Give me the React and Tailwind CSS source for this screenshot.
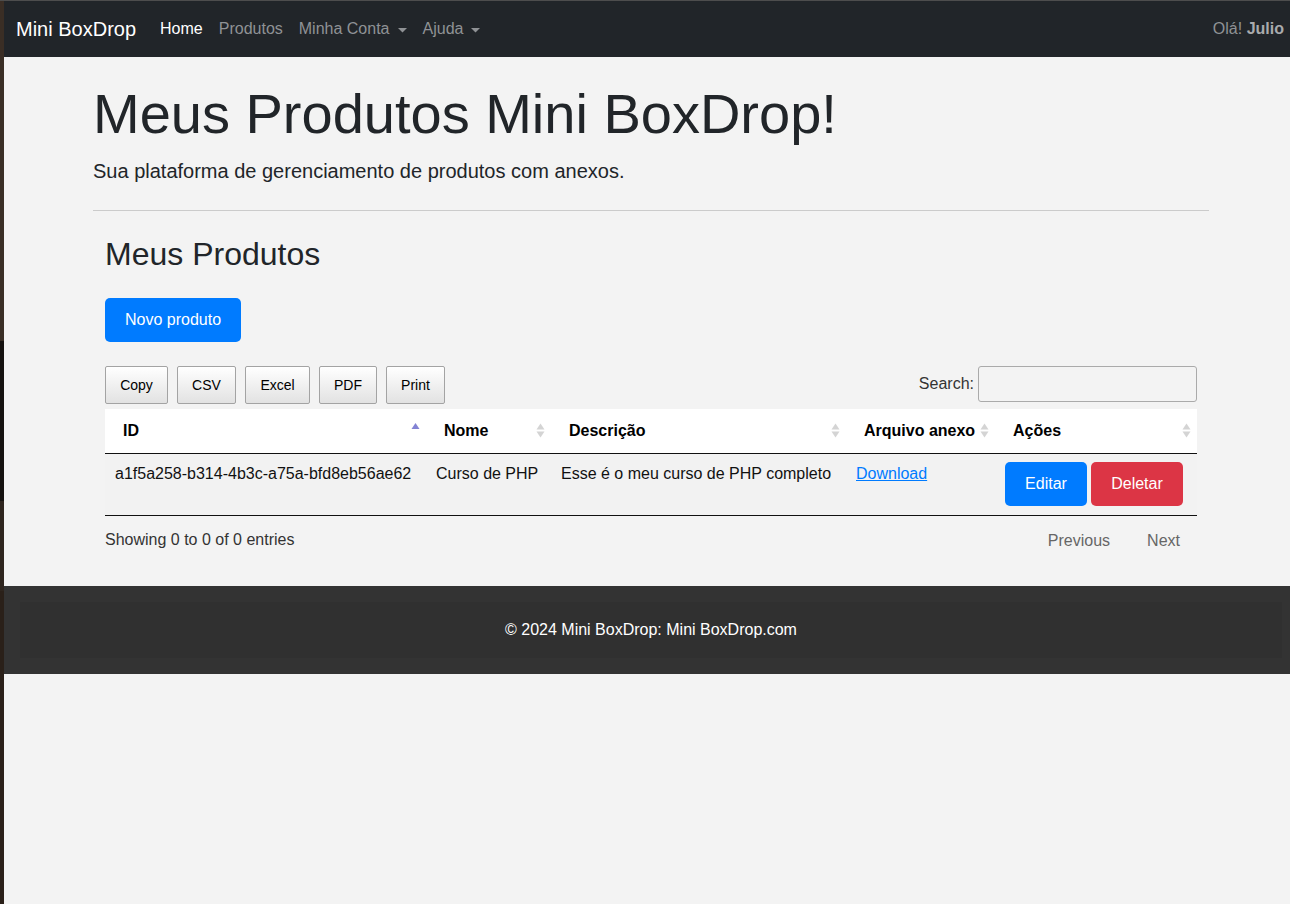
import React from 'react';

const SortIcon = ({ mode }) => {
  // mode: 'asc' shows the blue up arrow only, 'both' shows both gray arrows
  if (mode === 'asc') {
    return (
      <svg width="9" height="16" viewBox="0 0 9 16" className="absolute right-[6px] top-[13px]">
        <polygon points="0.5,7 4.5,1 8.5,7" fill="#8383d4" />
      </svg>
    );
  }
  return (
    <svg width="9" height="16" viewBox="0 0 9 16" className="absolute right-[6px] top-[14px]">
      <polygon points="0.5,6.5 4.5,0.5 8.5,6.5" fill="#d4d4d4" />
      <polygon points="0.5,8.5 4.5,14.5 8.5,8.5" fill="#d4d4d4" />
    </svg>
  );
};

const Caret = () => (
  <svg width="9" height="5" viewBox="0 0 9 5" className="ml-[8px] mt-[2px]">
    <polygon points="0,0 9,0 4.5,4.5" fill="currentColor" />
  </svg>
);

const App = () => {
  const exportButtons = [
    { label: 'Copy', w: 'w-[63px]' },
    { label: 'CSV', w: 'w-[59px]' },
    { label: 'Excel', w: 'w-[65px]' },
    { label: 'PDF', w: 'w-[58px]' },
    { label: 'Print', w: 'w-[59px]' },
  ];

  const columns = [
    { label: 'ID', width: 'w-[321px]', sort: 'asc' },
    { label: 'Nome', width: 'w-[125px]', sort: 'both' },
    { label: 'Descrição', width: 'w-[295px]', sort: 'both' },
    { label: 'Arquivo anexo', width: 'w-[149px]', sort: 'both' },
    { label: 'Ações', width: 'w-[202px]', sort: 'both' },
  ];

  return (
    <div className="min-h-[904px] flex flex-col bg-[#f3f3f3] font-['Liberation_Sans',Arial,sans-serif]">
      {/* window top edge */}
      <div className="h-px bg-[#4d4d4d]" />

      <div className="flex flex-1">
        {/* desktop strip at the left edge */}
        <div className="w-[4px] flex flex-col">
          <div className="h-[340px] bg-[#3a2e25]" />
          <div className="h-[160px] bg-[#151210]" />
          <div className="h-[90px] bg-[#2e251e]" />
          <div className="flex-1 bg-[#2a2019]" />
        </div>

        <div className="flex-1 flex flex-col">
          {/* Navbar */}
          <nav className="h-[56px] bg-[#212529] flex items-center pl-[12px] pr-[6px]">
            <span className="text-[20px] leading-[30px] text-white mr-[16px]">Mini BoxDrop</span>
            <div className="flex items-center text-[16px] text-[#8f9295]">
              <span className="px-[8px] text-white">Home</span>
              <span className="px-[8px]">Produtos</span>
              <span className="px-[8px] flex items-center">Minha Conta<Caret /></span>
              <span className="px-[8px] flex items-center">Ajuda<Caret /></span>
            </div>
            <div className="ml-auto text-[16px] text-[#8f9295]">
              Olá! <b className="text-[#a9abad]">Julio</b>
            </div>
          </nav>

          {/* Jumbotron */}
          <main className="w-[1116px] ml-[89px] pt-[23px] text-[#212529]">
            <h1 className="text-[56px] leading-[67px] mb-[9px]">Meus Produtos Mini BoxDrop!</h1>
            <p className="text-[20px] leading-[30px]">Sua plataforma de gerenciamento de produtos com anexos.</p>
            <div className="h-px bg-[#cbcbcb] mt-[24px]" />

            <div className="px-[12px]">
              <h2 className="text-[32px] leading-[38px] mt-[24px]">Meus Produtos</h2>
              <button className="mt-[25px] h-[44px] px-[20px] rounded-[5px] bg-[#007bff] text-white text-[16px]">
                Novo produto
              </button>

              {/* DataTables toolbar */}
              <div className="mt-[24px] flex items-start justify-between">
                <div className="flex gap-[9px]">
                  {exportButtons.map((b) => (
                    <button
                      key={b.label}
                      className={`${b.w} h-[38px] border border-[#a3a3a3] rounded-[2px] bg-gradient-to-b from-white to-[#e2e2e2] text-[14px] text-black`}
                    >
                      {b.label}
                    </button>
                  ))}
                </div>
                <label className="flex items-center text-[16px] text-[#333]">
                  Search:
                  <input className="ml-[4px] w-[219px] h-[36px] border border-[#aaa] rounded-[3px] bg-transparent" />
                </label>
              </div>

              {/* Table */}
              <table className="mt-[5px] w-[1092px] table-fixed border-collapse text-[16px] leading-[24px]">
                <thead>
                  <tr className="bg-white border-b border-[#111]">
                    {columns.map((c) => (
                      <th
                        key={c.label}
                        className={`${c.width} relative text-left font-bold text-black py-[10px] pl-[18px] pr-[20px] whitespace-nowrap`}
                      >
                        {c.label}
                        <SortIcon mode={c.sort} />
                      </th>
                    ))}
                  </tr>
                </thead>
                <tbody>
                  <tr className="bg-[#f2f2f2] border-b border-[#111] align-top text-[#111]">
                    <td className="pt-[8px] pb-[9px] px-[10px] whitespace-nowrap">a1f5a258-b314-4b3c-a75a-bfd8eb56ae62</td>
                    <td className="pt-[8px] px-[10px] whitespace-nowrap">Curso de PHP</td>
                    <td className="pt-[8px] px-[10px] whitespace-nowrap">Esse é o meu curso de PHP completo</td>
                    <td className="pt-[8px] px-[10px]">
                      <a className="text-[#007bff] underline">Download</a>
                    </td>
                    <td className="pt-[8px] pb-[9px] px-[10px]">
                      <div className="flex gap-[4px]">
                        <button className="h-[44px] w-[82px] rounded-[5px] bg-[#007bff] text-white">Editar</button>
                        <button className="h-[44px] w-[92px] rounded-[5px] bg-[#dc3545] text-white">Deletar</button>
                      </div>
                    </td>
                  </tr>
                </tbody>
              </table>

              <div className="flex items-start justify-between pt-[12px] text-[16px] leading-[24px]">
                <span className="text-[#333]">Showing 0 to 0 of 0 entries</span>
                <div className="flex gap-[5px] pt-[1px] text-[#666]">
                  <span className="px-[16px]">Previous</span>
                  <span className="px-[16px] mr-px">Next</span>
                </div>
              </div>
            </div>
          </main>

          {/* Footer */}
          <footer className="mt-[33px] bg-[#333] py-[16px] pl-[16px] pr-[8px]">
            <div className="h-[56px] bg-[#303030] flex items-center justify-center text-white text-[16px]">
              © 2024 Mini BoxDrop: Mini BoxDrop.com
            </div>
          </footer>
        </div>
      </div>
    </div>
  );
};

export default App;
